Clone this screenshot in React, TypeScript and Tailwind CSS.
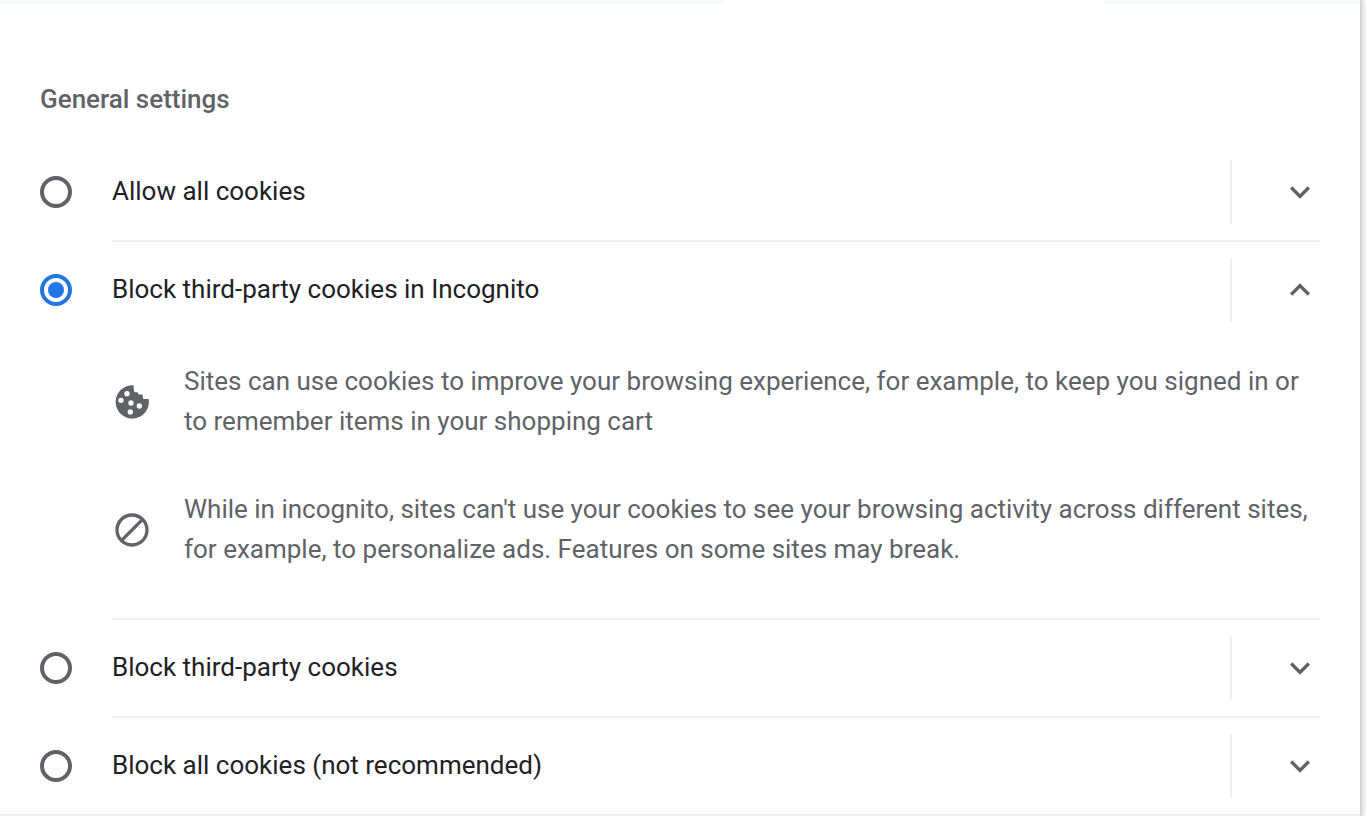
import { useState } from "react";

type Detail = { icon: "cookie" | "block"; text: string };
type Option = { id: string; label: string; details: Detail[] };

const siteCookies: Detail = {
  icon: "cookie",
  text: "Sites can use cookies to improve your browsing experience, for example, to keep you signed in or to remember items in your shopping cart",
};

const options: Option[] = [
  { id: "allow-all", label: "Allow all cookies", details: [siteCookies] },
  {
    id: "block-incognito",
    label: "Block third-party cookies in Incognito",
    details: [
      siteCookies,
      {
        icon: "block",
        text: "While in incognito, sites can't use your cookies to see your browsing activity across different sites, for example, to personalize ads. Features on some sites may break.",
      },
    ],
  },
  { id: "block-third-party", label: "Block third-party cookies", details: [siteCookies] },
  { id: "block-all", label: "Block all cookies (not recommended)", details: [siteCookies] },
];

function Chevron({ up }: { up: boolean }) {
  return (
    <svg viewBox="0 0 24 24" className="size-10 fill-[#5f6368]" aria-hidden="true">
      <path
        d={
          up
            ? "M12 8l-6 6 1.41 1.41L12 10.83l4.59 4.58L18 14z"
            : "M7.41 8.59L12 13.17l4.59-4.58L18 10l-6 6-6-6z"
        }
      />
    </svg>
  );
}

function DetailIcon({ icon }: { icon: Detail["icon"] }) {
  return (
    <svg viewBox="0 0 24 24" className="size-10 shrink-0 fill-[#5f6368]" aria-hidden="true">
      {icon === "cookie" ? (
        <path
          fillRule="evenodd"
          d="M12.9 2A10 10 0 1 0 22 10.2H19.2Q18.5 10.2 18.5 9.4V8.2Q18.5 7.5 17.8 7.5H16.4Q15.7 7.5 15.7 6.9Q15.6 6.1 14.8 6.1H14Q13.2 6.1 13.2 5.3ZM9 5.4a1.6 1.6 0 1 0 0 3.2a1.6 1.6 0 1 0 0-3.2ZM5.4 9.4a1.6 1.6 0 1 0 0 3.2a1.6 1.6 0 1 0 0-3.2ZM11.4 11a1.6 1.6 0 1 0 0 3.2a1.6 1.6 0 1 0 0-3.2ZM16.4 12.8a1.6 1.6 0 1 0 0 3.2a1.6 1.6 0 1 0 0-3.2ZM11 16.4a1.6 1.6 0 1 0 0 3.2a1.6 1.6 0 1 0 0-3.2Z"
        />
      ) : (
        <path d="M12 2C6.48 2 2 6.48 2 12s4.48 10 10 10 10-4.48 10-10S17.52 2 12 2zM4 12c0-4.42 3.58-8 8-8 1.85 0 3.55.63 4.9 1.69L5.69 16.9C4.63 15.55 4 13.85 4 12zm8 8c-1.85 0-3.55-.63-4.9-1.69L18.31 7.1C19.37 8.45 20 10.15 20 12c0 4.42-3.58 8-8 8z" />
      )}
    </svg>
  );
}

export default function App() {
  const [selected, setSelected] = useState("block-incognito");
  const [expanded, setExpanded] = useState("block-incognito");

  return (
    <div className="min-h-screen bg-[#f1f3f4] pr-1.5 font-['Roboto',sans-serif] text-[26px] leading-10 text-[#202124]">
      <main className="min-h-screen border-b-2 border-[#f0f0f0] bg-white shadow-[0_0_4px_1px_rgba(60,64,67,0.3)]">
        <div className="flex h-1 justify-between" aria-hidden="true">
          <div className="w-[53.4%] bg-[#f8f9fa]" />
          <div className="w-[18.8%] bg-[#f8f9fa]" />
        </div>
        <fieldset className="px-10 pt-[75px]">
          <legend className="float-left mb-[25px] w-full font-medium text-[#5f6368]">General settings</legend>
          <div className="clear-both">
            {options.map((option, index) => {
              const open = expanded === option.id;
              return (
                <div key={option.id} className="flex items-start">
                  <input
                    id={option.id}
                    type="radio"
                    name="cookies"
                    checked={selected === option.id}
                    onChange={() => setSelected(option.id)}
                    className="mt-8 mr-10 size-8 shrink-0 appearance-none rounded-full border-4 border-[#5f6368] bg-clip-content p-1 checked:border-[#2275e7] checked:bg-[#2275e7]"
                  />
                  <div className={index < options.length - 1 ? "min-w-0 flex-1 border-b-2 border-[#f0f0f0]" : "min-w-0 flex-1"}>
                    <div className="flex h-24 items-center">
                      <label htmlFor={option.id} className="flex-1 pb-0.5">
                        {option.label}
                      </label>
                      <button
                        type="button"
                        aria-expanded={open}
                        aria-label={`Details: ${option.label}`}
                        onClick={() => setExpanded(open ? "" : option.id)}
                        className="flex h-16 items-center border-l-2 border-[#f0f0f0] pl-12"
                      >
                        <Chevron up={open} />
                      </button>
                    </div>
                    {open && (
                      <ul className="flex flex-col gap-[46px] pt-[23px] pb-[47px] text-[#5f6368]">
                        {option.details.map((detail) => (
                          <li key={detail.icon} className="flex items-center gap-8">
                            <DetailIcon icon={detail.icon} />
                            <p className="pb-0.5">{detail.text}</p>
                          </li>
                        ))}
                      </ul>
                    )}
                  </div>
                </div>
              );
            })}
          </div>
        </fieldset>
      </main>
    </div>
  );
}
